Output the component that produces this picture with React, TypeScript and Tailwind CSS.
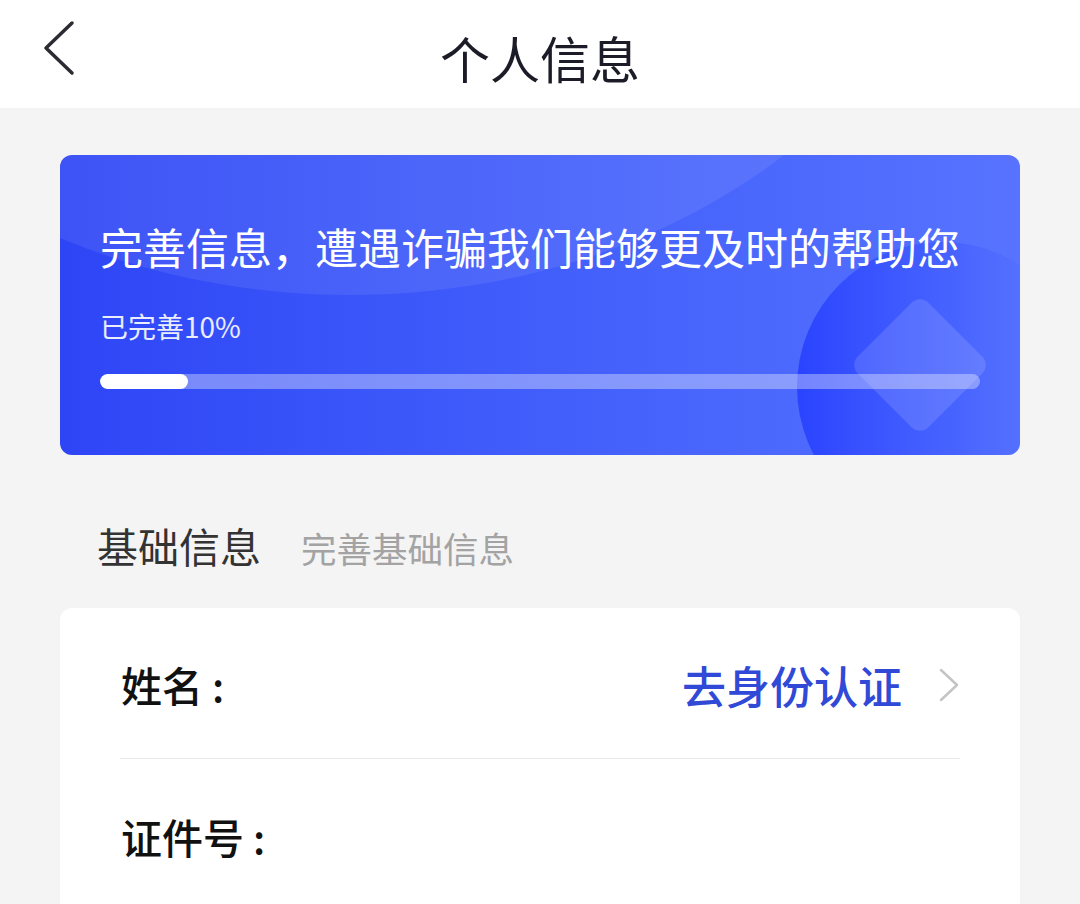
import React from 'react';

const font = { fontFamily: '"Noto Sans CJK SC", "Noto Sans", sans-serif' };

function BackIcon() {
  return (
    <svg width="34" height="56" viewBox="0 0 34 56" fill="none">
      <polyline points="29,3 3,28 29,53" stroke="#2b2b33" strokeWidth="3.5" strokeLinecap="round" strokeLinejoin="round" />
    </svg>
  );
}

function ChevronRight() {
  return (
    <svg width="22" height="34" viewBox="0 0 22 34" fill="none">
      <polyline points="3,2 19,17 3,32" stroke="#c4c4c4" strokeWidth="2.5" strokeLinecap="round" strokeLinejoin="round" />
    </svg>
  );
}

function BannerDecor() {
  return (
    <svg className="absolute inset-0" width="960" height="300" viewBox="0 0 960 300">
      <defs>
        <linearGradient id="coin" x1="0" y1="0" x2="1" y2="0">
          <stop offset="0" stopColor="#2a43ff" stopOpacity="1" />
          <stop offset="0.55" stopColor="#3f5bff" stopOpacity="0.6" />
          <stop offset="1" stopColor="#5a76ff" stopOpacity="0" />
        </linearGradient>
      </defs>
      <ellipse cx="290" cy="-350" rx="620" ry="490" fill="#ffffff" fillOpacity="0.08" />
      <circle cx="882" cy="232" r="145" fill="url(#coin)" />
      <rect x="-50" y="-50" width="100" height="100" rx="12" fill="#ffffff" fillOpacity="0.13" transform="translate(860 210) rotate(45)" />
    </svg>
  );
}

function Label({ text }: { text: string }) {
  return (
    <span className="text-[41px] font-medium text-[#111111] pl-[1px]">
      {text}
      <span className="ml-[9px]">:</span>
    </span>
  );
}

export default function App() {
  const progress = 10;

  return (
    <div className="w-[1080px] h-[904px] overflow-hidden bg-[#f4f4f4]" style={font}>
      <header className="relative h-[108px] bg-white flex items-center justify-center">
        <button className="absolute left-[43px] top-[20px]">
          <BackIcon />
        </button>
        <h1 className="text-[50px] leading-none text-[#1c1c28] mt-[6px]">个人信息</h1>
      </header>

      <div className="px-[60px] pt-[47px]">
        <section className="relative overflow-hidden rounded-[12px] h-[300px] bg-linear-to-r from-[#2e45f6] to-[#5773ff]">
          <BannerDecor />
          <div className="relative px-[40px] pt-[70px]">
            <p className="text-[43px] leading-[43px] text-white whitespace-nowrap">完善信息，遭遇诈骗我们能够更及时的帮助您</p>
            <p className="mt-[44px] text-[28px] leading-[28px] text-white/90">已完善{progress}%</p>
            <div className="mt-[34px] h-[15px] rounded-full bg-white/35 overflow-hidden">
              <div className="h-full rounded-full bg-white" style={{ width: `${progress}%` }} />
            </div>
          </div>
        </section>

        <div className="mt-[70px] pl-[37px] flex items-baseline gap-[40px]">
          <h2 className="text-[41px] leading-[41px] text-[#333333]">基础信息</h2>
          <span className="text-[35.5px] leading-[35px] text-[#a3a3a3]">完善基础信息</span>
        </div>

        <div className="mt-[42px] rounded-[12px] bg-white px-[60px]">
          <div className="h-[151px] flex items-center justify-between border-b border-[#e9e9e9]">
            <div className="pt-[4px]">
              <Label text="姓名" />
            </div>
            <div className="flex items-center gap-[36px] pt-[4px]">
              <span className="text-[44px] font-medium text-[#3049d6]">去身份认证</span>
              <ChevronRight />
            </div>
          </div>
          <div className="h-[156px] flex items-center">
            <Label text="证件号" />
          </div>
        </div>
      </div>
    </div>
  );
}
